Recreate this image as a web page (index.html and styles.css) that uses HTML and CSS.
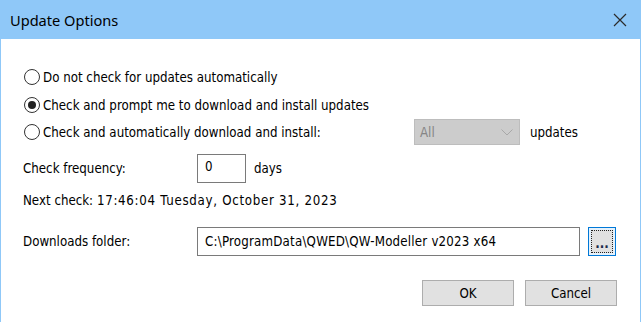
FILE: index.html
```html
<!DOCTYPE html>
<html lang="en">
<head>
  <meta charset="UTF-8">
  <title>Update Options</title>
  <link rel="stylesheet" href="styles.css">
</head>
<body>
  <div class="window">
    <div class="titlebar">
      <span class="title">Update Options</span>
      <svg class="close" width="14" height="14" viewBox="0 0 14 14">
        <path d="M1 1 L13 13 M13 1 L1 13" stroke="#2b2b2b" stroke-width="1.2" fill="none"/>
      </svg>
    </div>

    <div class="content">
      <label class="radio row-1"><span class="dot"></span>Do not check for updates automatically</label>
      <label class="radio row-2"><span class="dot checked"></span>Check and prompt me to download and install updates</label>

      <div class="row row-3">
        <label class="radio auto"><span class="dot"></span>Check and automatically download and install:</label>
        <div class="combo">
          <span>All</span>
          <svg width="12" height="7" viewBox="0 0 12 7"><path d="M0.5 0.5 L6 6 L11.5 0.5" stroke="#a8a8a8" stroke-width="1" fill="none"/></svg>
        </div>
        <span class="after">updates</span>
      </div>

      <div class="row row-4">
        <span class="label">Check frequency:</span>
        <div class="field short">0</div>
        <span class="after">days</span>
      </div>

      <div class="row row-5">Next check: <span class="stamp">17:46:04 Tuesday, October 31, 2023</span></div>

      <div class="row row-6">
        <span class="label">Downloads folder:</span>
        <div class="field path">C:\ProgramData\QWED\QW-Modeller v2023 x64</div>
        <button class="browse"><span>...</span></button>
      </div>

      <div class="buttons">
        <button class="btn">OK</button>
        <button class="btn">Cancel</button>
      </div>
    </div>
  </div>
</body>
</html>
```

FILE: styles.css
```css
body {
  margin: 0;
  background: #fff;
  font-family: 'DejaVu Sans', sans-serif;
  font-stretch: condensed;
  font-size: 13.2px;
  color: #000;
}
.window {
  height: 322px;
  box-sizing: border-box;
  border-left: 1px solid #8fc8f8;
  border-right: 1px solid #8fc8f8;
  display: flex;
  flex-direction: column;
}
.titlebar {
  height: 39px;
  flex: none;
  background: #8fc8f8;
  display: flex;
  align-items: center;
  justify-content: space-between;
  padding: 0 13px 0 9px;
}
.title {
  font-family: 'Noto Sans', sans-serif;
  font-stretch: normal;
  font-size: 14.6px;
  color: #000;
}
.close {
  display: block;
}
.content {
  display: flex;
  flex-direction: column;
  padding: 28px 23px 0 22px;
}
.radio {
  display: flex;
  align-items: center;
  height: 20px;
}
.dot {
  width: 16px;
  height: 16px;
  box-sizing: border-box;
  border: 1px solid #333;
  border-radius: 50%;
  margin: 0 3px 0 1px;
  display: flex;
  align-items: center;
  justify-content: center;
  flex: none;
}
.dot.checked::after {
  content: "";
  width: 8px;
  height: 8px;
  border-radius: 50%;
  background: #222;
}
.row-2 {
  margin-top: 8px;
}
.row {
  display: flex;
  align-items: center;
}
.row-3 {
  margin-top: 4px;
  height: 26px;
}
.auto {
  width: 391px;
  flex: none;
}
.combo {
  width: 106px;
  height: 26px;
  box-sizing: border-box;
  background: #cccccc;
  border: 1px solid #bdbdbd;
  display: flex;
  align-items: center;
  justify-content: space-between;
  padding: 0 6px 0 5px;
  color: #858585;
}
.after {
  margin-left: 10px;
}
.row-4 {
  margin-top: 9px;
}
.label {
  width: 174px;
  flex: none;
}
.field {
  height: 29px;
  box-sizing: border-box;
  border: 1px solid #7a7a7a;
  background: #fff;
  padding: 4px 7px;
}
.short {
  width: 49px;
}
.row-4 .after {
  margin-left: 8px;
}
.row-5 {
  margin-top: 9px;
  height: 16px;
  white-space: pre;
}
.stamp {
  letter-spacing: 0.7px;
}
.row-6 {
  margin-top: 19px;
}
.path {
  width: 383px;
  padding-top: 6px;
  letter-spacing: 0.2px;
}
.browse {
  margin-left: 8px;
  width: 28px;
  height: 29px;
  box-sizing: border-box;
  border: 1px solid #0078d7;
  background: #e5f1fb;
  padding: 2px;
  font: inherit;
  font-weight: bold;
  color: #1a2a4a;
}
.browse span {
  display: flex;
  align-items: flex-end;
  justify-content: center;
  height: 100%;
  box-sizing: border-box;
  border: 1px dotted #222;
  background: #e1e1e1;
  line-height: 16px;
}
.buttons {
  display: flex;
  justify-content: flex-end;
  gap: 11px;
  margin-top: 24px;
}
.btn {
  width: 92px;
  height: 26px;
  box-sizing: border-box;
  border: 1px solid #adadad;
  background: #e1e1e1;
  font: inherit;
  color: #000;
  padding: 0;
}
```
